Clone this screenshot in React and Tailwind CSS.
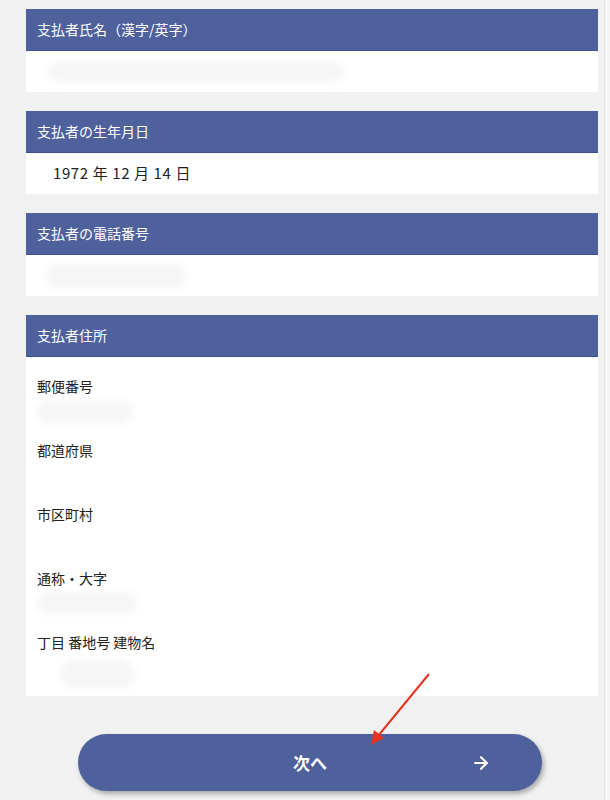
import React from 'react';
import { ArrowRight } from 'lucide-react';

const font = { fontFamily: '"Noto Sans CJK JP", "Noto Sans", sans-serif' };

// blurred (masked) value placeholder
function Masked({ className }) {
  return <div className={`rounded-full bg-[#f6f6f7] blur-[3px] ${className}`} />;
}

function SectionHeader({ children }) {
  return (
    <div className="h-[42px] flex items-center pl-[11px] bg-[#4f619c] border-b border-[#3e5196] text-white text-[14px]">
      {children}
    </div>
  );
}

const addressFields = [
  { label: '郵便番号', mask: 'ml-0 mt-[5px] w-[96px] h-[22px]' },
  { label: '都道府県', mask: null },
  { label: '市区町村', mask: null },
  { label: '通称・大字', mask: 'ml-0 mt-[4px] w-[100px] h-[22px]' },
  { label: '丁目 番地号 建物名', mask: 'ml-[23px] mt-[7px] w-[75px] h-[30px]' },
];

export default function App() {
  return (
    <div className="relative min-h-[800px] w-[610px] bg-[#f5f5f5]" style={font}>
      <div className="w-[605px] min-h-[800px] bg-[#f1f1f1] border-r border-[#e3e3e3] pt-[9px] pl-[26px] pr-[6px]">
        <div className="flex flex-col gap-[19px]">
          <section>
            <SectionHeader>支払者氏名（漢字/英字）</SectionHeader>
            <div className="h-[41px] bg-white flex items-center pl-[20px]">
              <Masked className="w-[300px] h-[20px]" />
            </div>
          </section>

          <section>
            <SectionHeader>支払者の生年月日</SectionHeader>
            <div className="h-[41px] bg-white flex items-center pl-[27px] text-[15px] tracking-[0.6px] text-[#222]">
              1972 年 12 月 14 日
            </div>
          </section>

          <section>
            <SectionHeader>支払者の電話番号</SectionHeader>
            <div className="h-[41px] bg-white flex items-center pl-[20px]">
              <Masked className="w-[140px] h-[24px]" />
            </div>
          </section>

          <section>
            <SectionHeader>支払者住所</SectionHeader>
            <div className="bg-white pt-[19px] pl-[11px]">
              {addressFields.map((f) => (
                <div key={f.label} className="h-[64px]">
                  <div className="h-[20px] leading-[20px] text-[14px] text-[#222]">{f.label}</div>
                  {f.mask && <Masked className={f.mask} />}
                </div>
              ))}
            </div>
          </section>
        </div>

        <button className="mt-[38px] ml-[52px] w-[464px] h-[57px] rounded-full bg-[#4f619c] text-white flex items-center shadow-[2px_3px_5px_rgba(0,0,0,0.3)]">
          <span className="flex-1 pl-[71px] text-center text-[17px] font-bold">次へ</span>
          <ArrowRight className="mr-[51px] w-[20px] h-[20px]" strokeWidth={2.6} />
        </button>
      </div>

      {/* annotation arrow */}
      <svg className="absolute left-0 top-0 pointer-events-none" width="610" height="800">
        <line x1="429" y1="674" x2="378" y2="736" stroke="#e4331f" strokeWidth="2" />
        <polygon points="371,745 374,730 384,738" fill="#e4331f" />
      </svg>
    </div>
  );
}
